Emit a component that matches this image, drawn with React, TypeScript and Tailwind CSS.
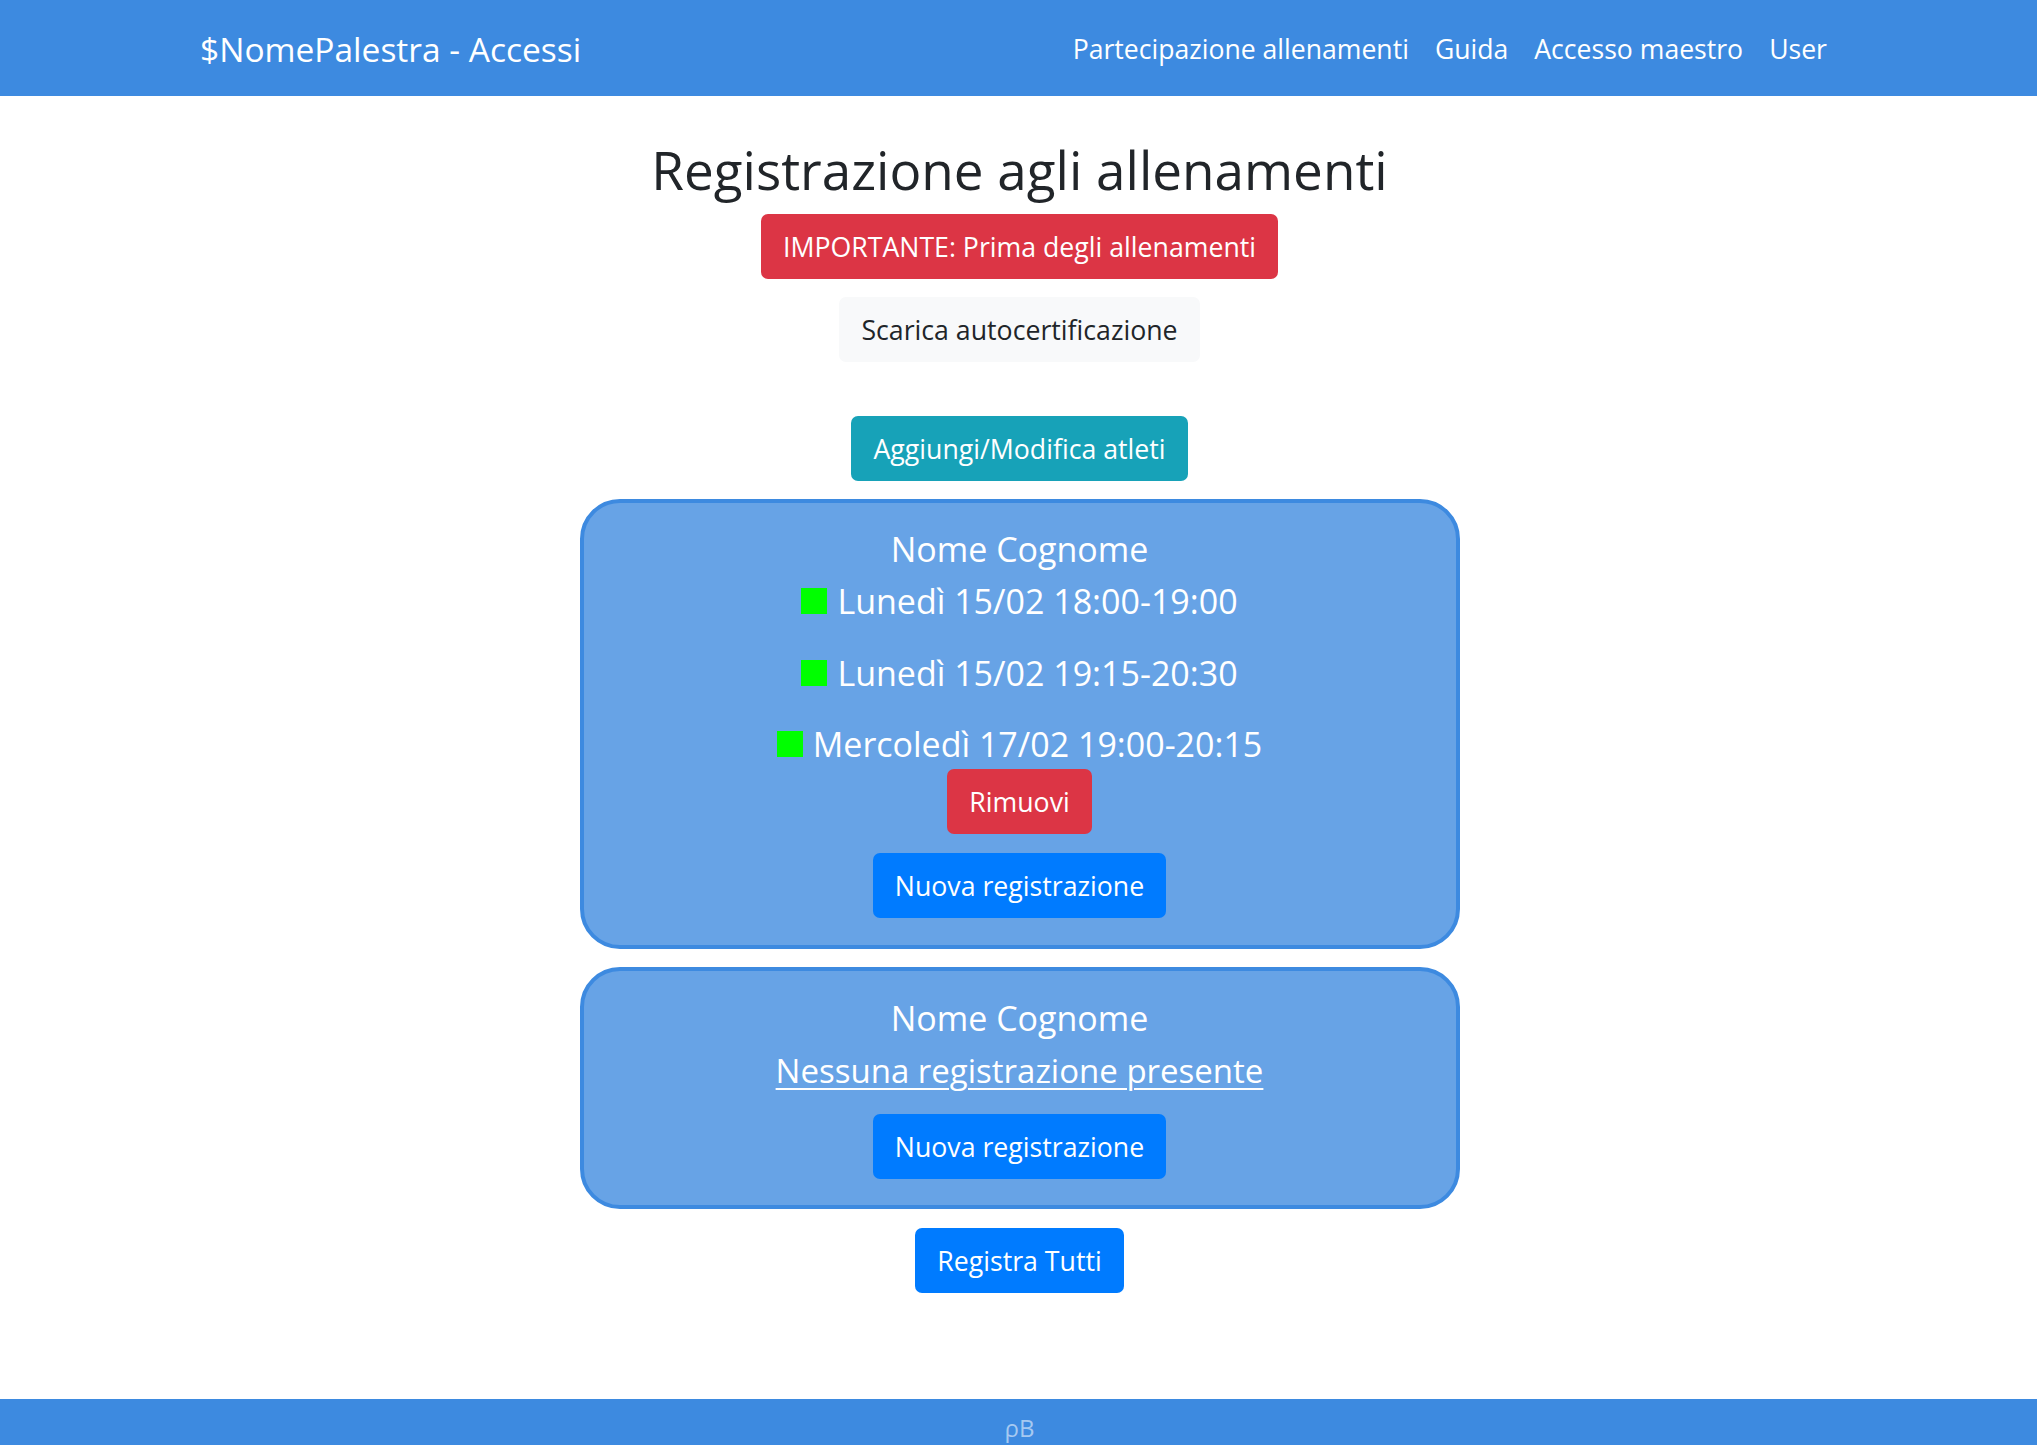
import React from 'react';

const sessions = [
  { id: 1, label: 'Lunedì 15/02 18:00-19:00', mt: 'mt-[3px]' },
  { id: 2, label: 'Lunedì 15/02 19:15-20:30', mt: 'mt-[22px]' },
  { id: 3, label: 'Mercoledì 17/02 19:00-20:15', mt: 'mt-[21px]' },
];

function Btn({ color, children, className = '' }: { color: string; children: React.ReactNode; className?: string }) {
  return (
    <button
      className={`${color} ${className} border border-transparent rounded-[7px] px-[21px] py-[13px] text-[26.7px] leading-[37px]`}
    >
      {children}
    </button>
  );
}

export default function App() {
  return (
    <div className="h-screen flex flex-col bg-white font-['Open_Sans',sans-serif] text-[#212529] overflow-hidden">
      <nav className="h-[96px] shrink-0 bg-[#3d8ae0] flex items-center justify-between pl-[200px] pr-[210px] text-white">
        <span className="text-[33.5px] leading-[48px] mt-[2px]">$NomePalestra - Accessi</span>
        <div className="flex items-center gap-[26px] text-[26.6px] leading-[40px] mt-[2px]">
          <a>Partecipazione allenamenti</a>
          <a>Guida</a>
          <a>Accesso maestro</a>
          <a>User</a>
        </div>
      </nav>

      <main className="flex-1 flex flex-col items-center pl-[2px]">
        <h1 className="mt-[38px] text-[53px] leading-[72px] font-normal">Registrazione agli allenamenti</h1>
        <Btn color="bg-[#dc3545] text-white" className="mt-[8px]">IMPORTANTE: Prima degli allenamenti</Btn>
        <Btn color="bg-[#f8f9fa] text-[#212529]" className="mt-[18px]">Scarica autocertificazione</Btn>
        <Btn color="bg-[#17a2b8] text-white" className="mt-[54px]">Aggiungi/Modifica atleti</Btn>

        <div className="mt-[18px] w-[880px] border-4 border-[#3d8ae0] bg-[#67a3e6] rounded-[40px] pt-[22px] pb-[27px] flex flex-col items-center text-white">
          <div className="text-[34px] leading-[48px]">Nome Cognome</div>
          {sessions.map((s) => (
            <div key={s.id} className={`${s.mt} h-[50px] flex items-center gap-[10px] text-[34px]`}>
              <span className="w-[26px] h-[26px] bg-[#00ff00]" />
              <span>{s.label}</span>
            </div>
          ))}
          <Btn color="bg-[#dc3545] text-white">Rimuovi</Btn>
          <Btn color="bg-[#007bff] text-white" className="mt-[19px]">Nuova registrazione</Btn>
        </div>

        <div className="mt-[18px] w-[880px] border-4 border-[#3d8ae0] bg-[#67a3e6] rounded-[40px] pt-[23px] pb-[26px] flex flex-col items-center text-white">
          <div className="text-[34px] leading-[48px]">Nome Cognome</div>
          <a className="mt-[4px] text-[33px] leading-[50px] underline underline-offset-[5px] decoration-2">
            Nessuna registrazione presente
          </a>
          <Btn color="bg-[#007bff] text-white" className="mt-[18px]">Nuova registrazione</Btn>
        </div>

        <Btn color="bg-[#007bff] text-white" className="mt-[19px]">Registra Tutti</Btn>
      </main>

      <footer className="h-[46px] shrink-0 bg-[#3d8ae0] text-center pt-[11px] pl-[2px]">
        <span className="text-[24px] leading-[36px] text-[#a6c9f1]">ρB</span>
      </footer>
    </div>
  );
}
